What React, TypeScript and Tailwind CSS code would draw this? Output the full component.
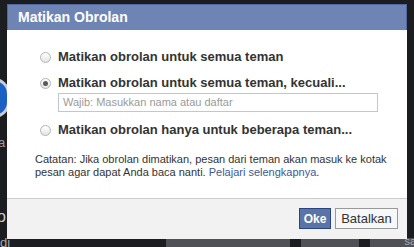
import React from "react";

function Radio({ checked }: { checked?: boolean }) {
  return (
    <span className="flex h-[11px] w-[11px] shrink-0 items-center justify-center rounded-full border border-[#b4b4b4] bg-gradient-to-b from-[#ffffff] to-[#e4e4e4]">
      {checked && <span className="h-[5px] w-[5px] rounded-full bg-[#5a5a5a]" />}
    </span>
  );
}

export default function App() {
  return (
    <div className="relative h-[247px] w-[414px] overflow-hidden bg-[#1c1d21] font-['Liberation_Sans',Arial,sans-serif]">
      {/* whatever lies behind the dialog */}
      <div className="absolute left-[-22px] top-[78px] h-[40px] w-[32px] rounded-full border-[3px] border-[#c9ccd3] bg-[#1a5fc4]" />
      <div className="absolute left-[-2px] top-[136px] text-[13px] leading-none text-[#9a9ca3]">a</div>
      <div className="absolute left-[-3px] top-[209px] text-[16px] leading-none text-[#c9cbd0]">o</div>
      <div className="absolute left-[0px] top-[236px] text-[13px] leading-none text-[#a8aab0]">di</div>
      <div className="absolute bottom-0 left-[166px] h-[9px] w-[124px] bg-[#505156]" />
      <div className="absolute bottom-0 left-[301px] h-[9px] w-[58px] bg-[#505156]" />
      <div className="absolute bottom-0 left-[370px] h-[9px] w-[44px] bg-[#505156]" />
      <div className="absolute right-[-2px] top-[236px] text-[11px] leading-none text-[#a8aab0]">sa</div>

      {/* dialog */}
      <div className="absolute left-[7px] top-[4px] flex w-[400px] flex-col">
        <div className="flex h-[26px] items-center border border-b-0 border-[#5068a0] bg-[#6d84b4] pl-[10px] text-[14px] font-bold text-white">
          Matikan Obrolan
        </div>

        <div className="flex h-[168px] flex-col bg-white pl-[28px] pt-[18px] text-[#333333]">
          <label className="ml-[5px] flex h-[18px] items-center gap-[7px] text-[13px] font-bold">
            <Radio />
            Matikan obrolan untuk semua teman
          </label>
          <label className="ml-[5px] mt-[8px] flex h-[18px] items-center gap-[7px] text-[13px] font-bold">
            <Radio checked />
            Matikan obrolan untuk semua teman, kecuali...
          </label>
          <div className="ml-[23px] mt-[1px] flex h-[19px] w-[320px] items-center border border-[#bdc7d8] pl-[4px] text-[11px] text-[#9a9a9a]">
            Wajib: Masukkan nama atau daftar
          </div>
          <label className="ml-[5px] mt-[9px] flex h-[18px] items-center gap-[7px] text-[13px] font-bold">
            <Radio />
            Matikan obrolan hanya untuk beberapa teman...
          </label>
          <p className="mt-[14px] w-[360px] text-[11px] leading-[13px] text-[#333333]">
            Catatan: Jika obrolan dimatikan, pesan dari teman akan masuk ke kotak pesan agar dapat Anda baca nanti.{" "}
            <a className="text-[#3b5998]">Pelajari selengkapnya</a>.
          </p>
        </div>

        <div className="flex h-[41px] justify-end gap-[4px] border-t border-[#cccccc] bg-[#f2f2f2] pr-[9px] pt-[9px]">
          <button className="flex h-[21px] w-[32px] items-center justify-center border border-[#29447e] bg-[#5b74a8] text-[12px] font-bold text-white">
            Oke
          </button>
          <button className="flex h-[21px] w-[63px] items-center justify-center border border-[#999999] bg-[#f6f7f9] text-[13px] text-[#333333]">
            Batalkan
          </button>
        </div>
      </div>
    </div>
  );
}
